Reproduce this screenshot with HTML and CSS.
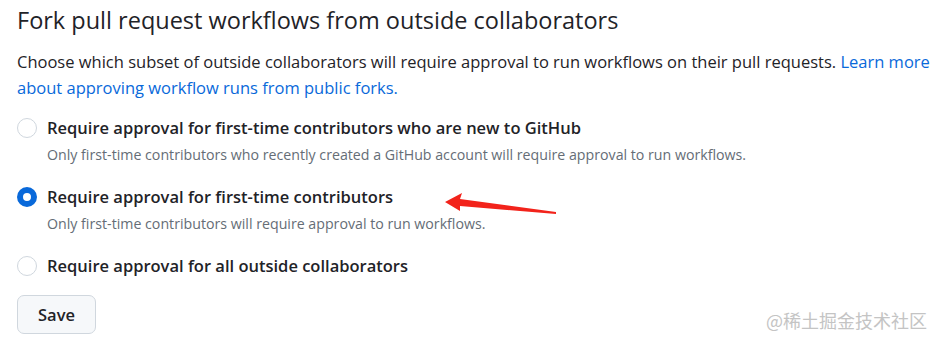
FILE: index.html
```html
<!DOCTYPE html>
<html lang="en">
<head>
<meta charset="UTF-8">
<title>Actions settings</title>
<link rel="stylesheet" href="styles.css">
</head>
<body>

    <div class="settings">

        <h2 class="subhead">Fork pull request workflows from outside collaborators</h2>

        <p class="note">Choose which subset of outside collaborators will require approval to run workflows on their pull requests. <a href="#">Learn more about approving workflow runs from public forks.</a></p>

        <!-- approval options -->
        <div class="radio-group">
            <label class="radio-option">
                <input type="radio" name="fork-approval" class="radio">
                <span class="radio-text">
                    <span class="radio-label">Require approval for first-time contributors who are new to GitHub</span>
                    <span class="radio-note">Only first-time contributors who recently created a GitHub account will require approval to run workflows.</span>
                </span>
            </label>

            <label class="radio-option">
                <input type="radio" name="fork-approval" class="radio" checked>
                <span class="radio-text">
                    <span class="radio-label">Require approval for first-time contributors</span>
                    <span class="radio-note">Only first-time contributors will require approval to run workflows.</span>
                </span>
            </label>

            <label class="radio-option">
                <input type="radio" name="fork-approval" class="radio">
                <span class="radio-text">
                    <span class="radio-label">Require approval for all outside collaborators</span>
                </span>
            </label>
        </div>

        <button class="btn">Save</button>
    </div>

    <!-- red annotation arrow drawn over the screenshot -->
    <svg class="annotation" width="941" height="347" viewBox="0 0 941 347">
        <polygon points="445,202 462,193 460,199 556,212 556,214 460,206 460,211" fill="#f2231b"/>
    </svg>

    <div class="watermark">@稀土掘金技术社区</div>

</body>
</html>
```

FILE: styles.css
```css
:root
{
    --text-colour: #1f2328;
    --muted-colour: #656d76;
    --link-colour: #0969da;
    --border-colour: #d0d7de;
    --button-background: #f6f8fa;
}

body
{
    margin: 0;
    color: var(--text-colour);
    font-family: "Open Sans", "Noto Sans", sans-serif;
    background: #ffffff;
}

.settings
{
    padding: 0 6px 0 17px;
}

.subhead
{
    font-size: 23.5px;
    font-weight: 400;
    line-height: 30px;
    margin: 5px 0 0 0;
}

.note
{
    font-size: 16.5px;
    line-height: 26px;
    margin: 14px 0 0 0;
}

.note a
{
    color: var(--link-colour);
    text-decoration: none;
}

.radio-group
{
    display: flex;
    flex-direction: column;
    gap: 19px;
    margin-top: 15px;
}

.radio-option
{
    display: flex;
    align-items: flex-start;
    gap: 10px;
}

.radio
{
    appearance: none;
    -webkit-appearance: none;
    flex: none;
    width: 20px;
    height: 20px;
    margin: 2px 0 0 0;
    border: 1px solid var(--border-colour);
    border-radius: 50%;
    background: #ffffff;
}

.radio:checked
{
    border: 6px solid var(--link-colour);
}

.radio-text
{
    display: flex;
    flex-direction: column;
}

.radio-label
{
    font-size: 16.5px;
    font-weight: 600;
    line-height: 24px;
}

.radio-note
{
    font-size: 14.2px;
    line-height: 22px;
    margin-top: 4px;
    color: var(--muted-colour);
}

.btn
{
    margin-top: 17px;
    width: 79px;
    height: 39px;
    font-family: inherit;
    font-size: 16.5px;
    font-weight: 600;
    color: var(--text-colour);
    background: var(--button-background);
    border: 1px solid var(--border-colour);
    border-radius: 7px;
}

.annotation
{
    position: absolute;
    left: 0;
    top: 0;
    pointer-events: none;
}

.watermark
{
    position: absolute;
    right: 14px;
    top: 307px;
    font-family: "Noto Sans CJK SC", sans-serif;
    font-size: 18px;
    color: #c4c4c4;
}
```
